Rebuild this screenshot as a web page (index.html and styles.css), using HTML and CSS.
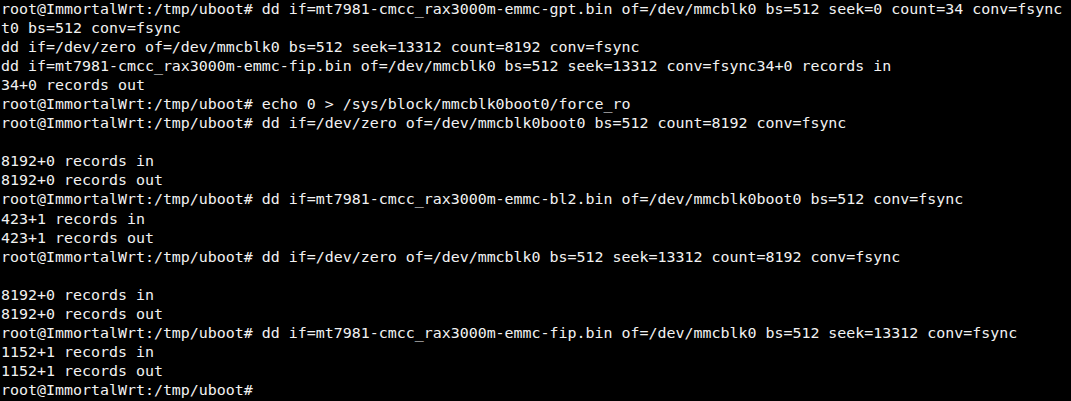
FILE: index.html
```html
<!DOCTYPE html>
<html>
<head>
<meta charset="utf-8">
<link rel="stylesheet" href="styles.css">
</head>
<body>
<pre class="term">root@ImmortalWrt:/tmp/uboot# dd if=mt7981-cmcc_rax3000m-emmc-gpt.bin of=/dev/mmcblk0 bs=512 seek=0 count=34 conv=fsync
t0 bs=512 conv=fsync
dd if=/dev/zero of=/dev/mmcblk0 bs=512 seek=13312 count=8192 conv=fsync
dd if=mt7981-cmcc_rax3000m-emmc-fip.bin of=/dev/mmcblk0 bs=512 seek=13312 conv=fsync34+0 records in
34+0 records out
root@ImmortalWrt:/tmp/uboot# echo 0 &gt; /sys/block/mmcblk0boot0/force_ro
root@ImmortalWrt:/tmp/uboot# dd if=/dev/zero of=/dev/mmcblk0boot0 bs=512 count=8192 conv=fsync

8192+0 records in
8192+0 records out
root@ImmortalWrt:/tmp/uboot# dd if=mt7981-cmcc_rax3000m-emmc-bl2.bin of=/dev/mmcblk0boot0 bs=512 conv=fsync
423+1 records in
423+1 records out
root@ImmortalWrt:/tmp/uboot# dd if=/dev/zero of=/dev/mmcblk0 bs=512 seek=13312 count=8192 conv=fsync

8192+0 records in
8192+0 records out
root@ImmortalWrt:/tmp/uboot# dd if=mt7981-cmcc_rax3000m-emmc-fip.bin of=/dev/mmcblk0 bs=512 seek=13312 conv=fsync
1152+1 records in
1152+1 records out
root@ImmortalWrt:/tmp/uboot# </pre>
</body>
</html>
```
FILE: styles.css
```css
html, body {
  margin: 0;
  padding: 0;
  background: #000;
  height: 100%;
  overflow: hidden;
}
.term {
  margin: 0;
  padding: 0 0 0 1px;
  font-family: "DejaVu Sans Mono", monospace;
  font-size: 14.95px;
  line-height: 19.05px;
  color: #f2f2f2;
  white-space: pre;
}
```
